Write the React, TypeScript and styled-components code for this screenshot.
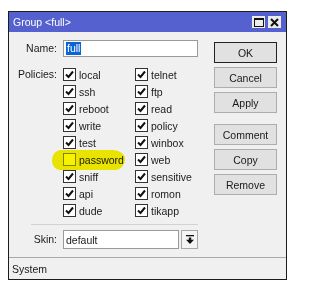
import styled, { createGlobalStyle } from 'styled-components';

const GlobalStyle = createGlobalStyle`
    body {
        margin: 0;
        background: #ffffff;
        font-family: 'Liberation Sans', Arial, sans-serif;
        font-size: 10.5px;
        color: #1a1a1a;
    }
`;

const leftPolicies = ['local', 'ssh', 'reboot', 'write', 'test', 'password', 'sniff', 'api', 'dude'];
const rightPolicies = ['telnet', 'ftp', 'read', 'policy', 'winbox', 'web', 'sensitive', 'romon', 'tikapp'];
const policies = leftPolicies.flatMap((name, i) => [
    { name, checked: name !== 'password' },
    { name: rightPolicies[i], checked: true },
]);

const Window = styled.div`
    margin: 11px 0 0 8px;
    width: 279px;
    height: 269px;
    box-sizing: border-box;
    border: 1px solid #1c1c1c;
    background: #f0f0f0;
    display: flex;
    flex-direction: column;
`;

const TitleBar = styled.div`
    height: 20px;
    flex: none;
    background: #5561cf;
    color: #ffffff;
    display: flex;
    align-items: center;
    padding: 0 5px 0 4px;
    font-size: 10.5px;
`;

const Title = styled.span`
    flex: 1;
`;

const TitleButton = styled.span`
    width: 13px;
    height: 12px;
    margin-left: 3px;
    background: #ececec;
    display: flex;
    align-items: center;
    justify-content: center;
`;

const Body = styled.div`
    flex: 1;
    display: flex;
    padding-top: 8px;
`;

const Form = styled.div`
    width: 189px;
    display: grid;
    grid-template-columns: 48px 135px;
    column-gap: 6px;
    align-content: start;
`;

const Label = styled.div<{ $top?: boolean }>`
    text-align: right;
    line-height: 17px;
    align-self: ${(p) => (p.$top ? 'start' : 'center')};
`;

const TextField = styled.div<{ $height: number }>`
    height: ${(p) => p.$height}px;
    box-sizing: border-box;
    border: 1px solid #9a9a9a;
    background: #ffffff;
    display: flex;
    align-items: center;
    padding-left: 2px;
    flex: 1;
`;

const Selected = styled.span`
    background: #0a64d8;
    color: #ffffff;
    padding: 0 1px;
    line-height: 13px;
`;

const PolicyGrid = styled.div`
    grid-column: 2;
    margin-top: 9px;
    display: grid;
    grid-template-columns: 72px 63px;
    grid-auto-rows: 17px;
`;

const PolicyLabelCell = styled(Label)`
    margin-top: 9px;
`;

const Policy = styled.label<{ $marked?: boolean }>`
    position: relative;
    display: flex;
    align-items: center;
    gap: 3px;
    white-space: nowrap;

    ${(p) =>
        p.$marked &&
        `
        &::after {
            content: '';
            position: absolute;
            left: -11px;
            top: -1px;
            width: 73px;
            height: 20px;
            background: #f7f200;
            border-radius: 9px 12px 10px 8px / 10px 9px 11px 9px;
            mix-blend-mode: multiply;
            pointer-events: none;
        }
    `}
`;

const Box = styled.span<{ $marked?: boolean }>`
    width: 13px;
    height: 13px;
    box-sizing: border-box;
    border: 1px solid ${(p) => (p.$marked ? '#8a8a8a' : '#333333')};
    background: #ffffff;
    display: flex;
    align-items: center;
    justify-content: center;
    flex: none;
`;

const Separator = styled.div<{ $inset?: number }>`
    grid-column: 1 / -1;
    height: 1px;
    background: #d2d2d2;
    margin: 5px 0 0 ${(p) => p.$inset ?? 0}px;
`;

const SkinRow = styled.div`
    display: flex;
    gap: 2px;
    margin-top: 5px;
`;

const SkinLabel = styled(Label)`
    margin-top: 5px;
    line-height: 19px;
`;

const DropButton = styled.div`
    width: 17px;
    height: 19px;
    box-sizing: border-box;
    border: 1px solid #a8a8a8;
    background: #f4f4f4;
    display: flex;
    align-items: center;
    justify-content: center;
`;

const Buttons = styled.div`
    margin-left: 16px;
    padding-top: 2px;
    width: 63px;
    display: flex;
    flex-direction: column;
    gap: 4px;
`;

const Button = styled.div<{ $default?: boolean; $spaced?: boolean }>`
    height: 21px;
    box-sizing: border-box;
    border: 1px solid ${(p) => (p.$default ? '#222222' : '#adadad')};
    background: #e1e1e1;
    display: flex;
    align-items: center;
    justify-content: center;
    margin-top: ${(p) => (p.$spaced ? 7 : 0)}px;
`;

const StatusBar = styled.div`
    height: 22px;
    flex: none;
    box-sizing: border-box;
    border-top: 1px solid #a9a9a9;
    display: flex;
    align-items: center;
    padding-left: 3px;
`;

const Check = () => (
    <svg width="9" height="9" viewBox="0 0 9 9">
        <path d="M1 4.5 L3.5 7 L8 1.5" fill="none" stroke="#111" strokeWidth="2" />
    </svg>
);

const DownIcon = () => (
    <svg width="8" height="9" viewBox="0 0 8 9">
        <rect x="0" y="0" width="8" height="1.3" fill="#111" />
        <rect x="2.8" y="2.5" width="2.4" height="2.5" fill="#111" />
        <path d="M0 4.8 H8 L4 9 Z" fill="#111" />
    </svg>
);

export default function App() {
    return (
        <>
            <GlobalStyle />
            <Window>
                <TitleBar>
                    <Title>Group &lt;full&gt;</Title>
                    <TitleButton>
                        <svg width="10" height="9" viewBox="0 0 10 9">
                            <rect x="0.5" y="0.5" width="9" height="8" fill="none" stroke="#111" />
                            <rect x="0" y="0" width="10" height="2" fill="#111" />
                        </svg>
                    </TitleButton>
                    <TitleButton>
                        <svg width="9" height="9" viewBox="0 0 9 9">
                            <path d="M1 1 L8 8 M8 1 L1 8" stroke="#111" strokeWidth="2" />
                        </svg>
                    </TitleButton>
                </TitleBar>

                <Body>
                    <Form>
                        <Label>Name:</Label>
                        <TextField $height={17}>
                            <Selected>full</Selected>
                        </TextField>

                        <PolicyLabelCell $top>Policies:</PolicyLabelCell>
                        <PolicyGrid>
                            {policies.map((p) => {
                                const marked = p.name === 'password';
                                return (
                                    <Policy key={p.name} $marked={marked}>
                                        <Box $marked={marked}>{p.checked && <Check />}</Box>
                                        {p.name}
                                    </Policy>
                                );
                            })}
                        </PolicyGrid>

                        <Separator $inset={22} />

                        <SkinLabel $top>Skin:</SkinLabel>
                        <SkinRow>
                            <TextField $height={19}>default</TextField>
                            <DropButton>
                                <DownIcon />
                            </DropButton>
                        </SkinRow>
                    </Form>

                    <Buttons>
                        <Button $default>OK</Button>
                        <Button>Cancel</Button>
                        <Button>Apply</Button>
                        <Button $spaced>Comment</Button>
                        <Button>Copy</Button>
                        <Button>Remove</Button>
                    </Buttons>
                </Body>

                <StatusBar>System</StatusBar>
            </Window>
        </>
    );
}
